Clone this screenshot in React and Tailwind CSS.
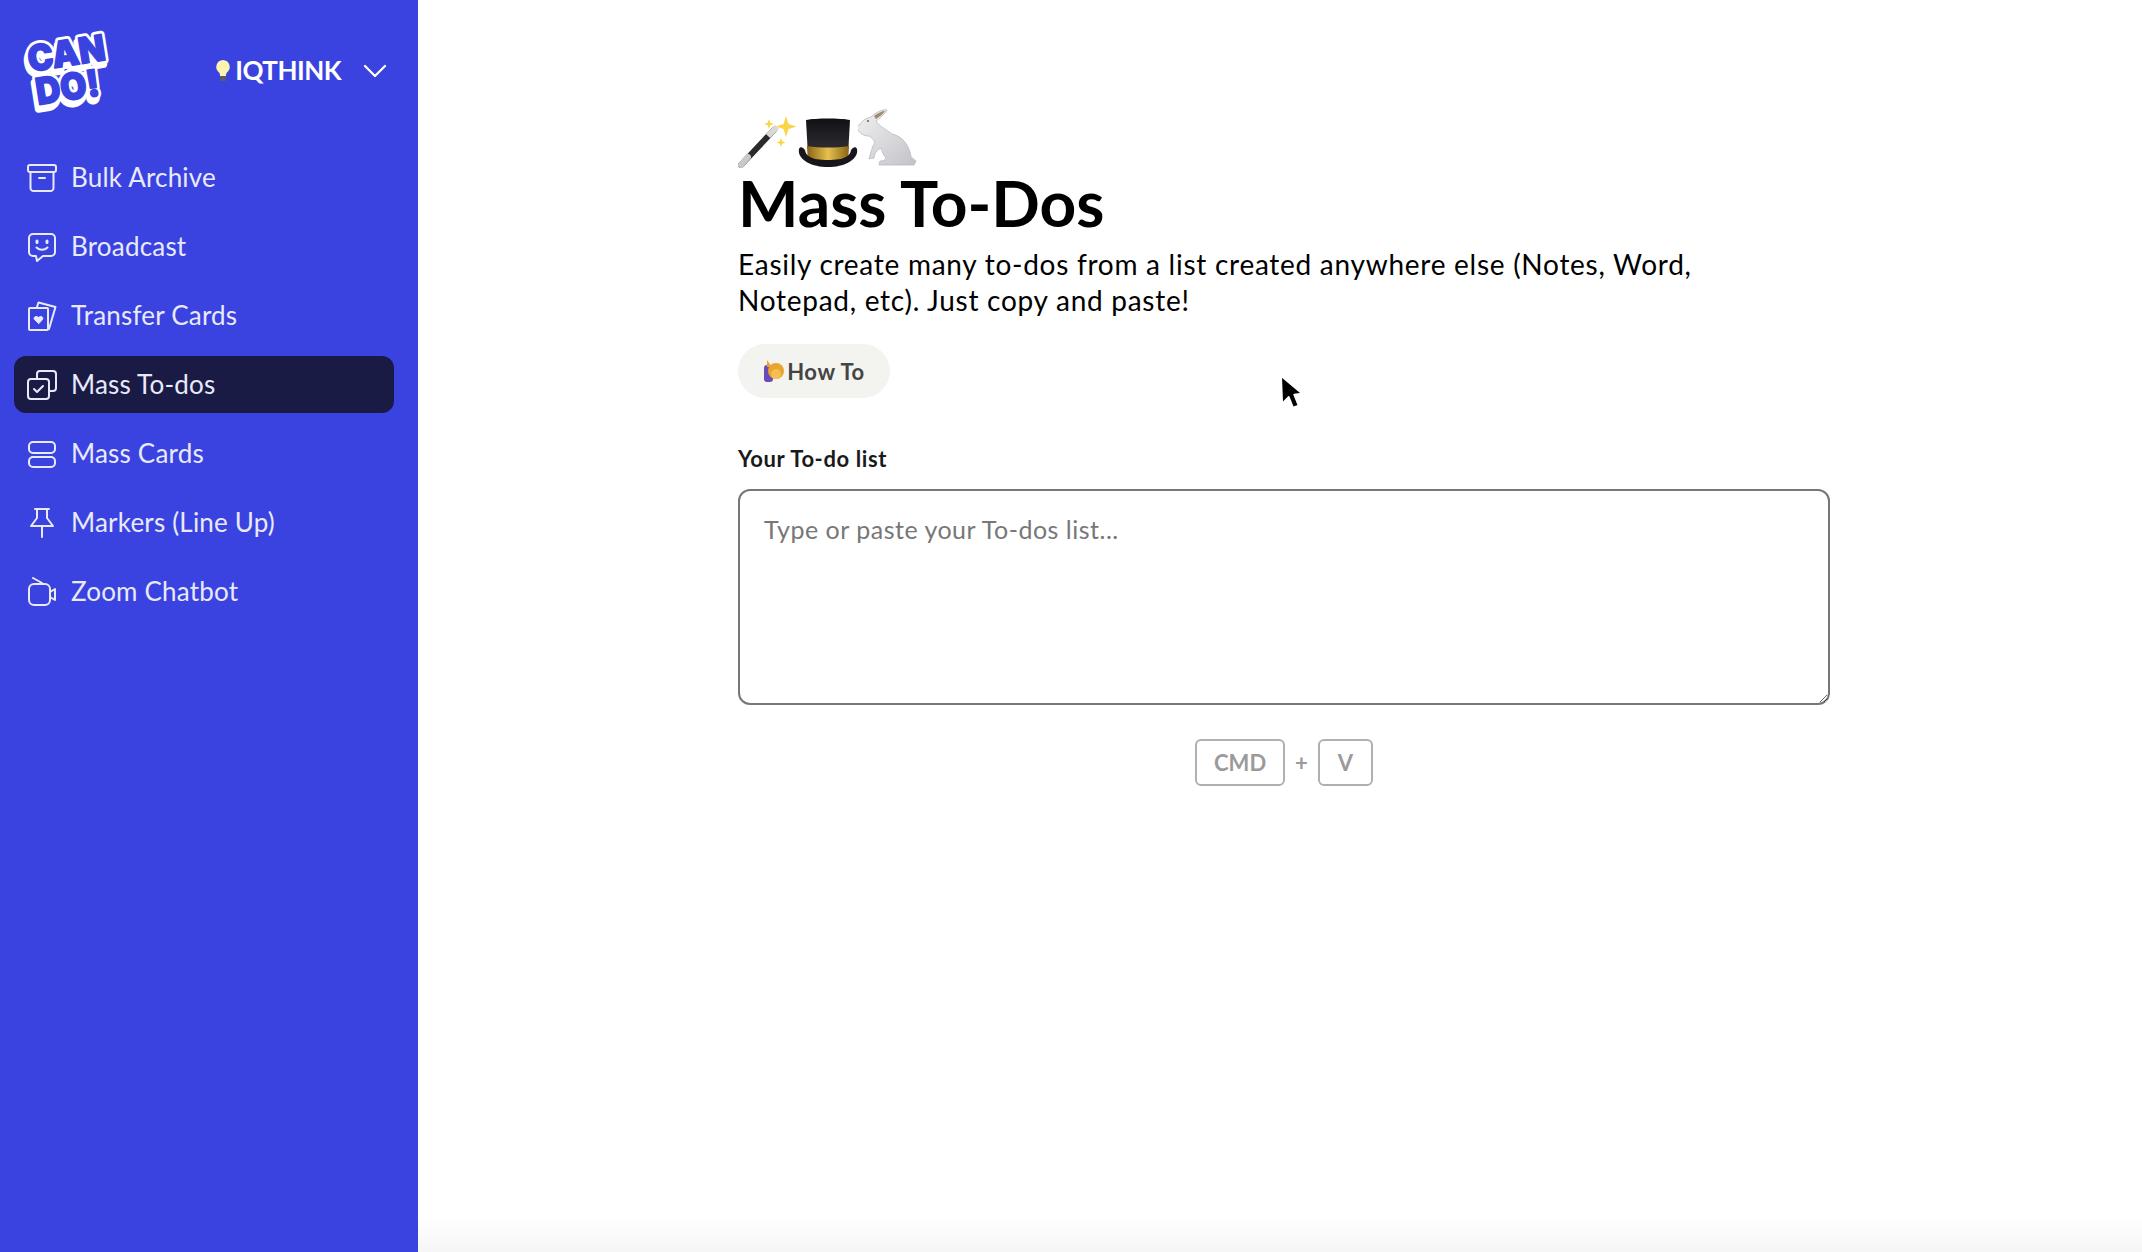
import { ChevronDown } from 'lucide-react'

const Icon = ({ children }) => (
  <svg viewBox="0 0 30 30" className="w-[30px] h-[30px] shrink-0" fill="none" stroke="currentColor" strokeWidth="2" strokeLinecap="round" strokeLinejoin="round">
    {children}
  </svg>
)

const navItems = [
  {
    label: 'Bulk Archive',
    icon: (
      <>
        <rect x="1" y="2" width="28" height="7" rx="2" />
        <path d="M3.500 9v16a3 3 0 0 0 3 3h17a3 3 0 0 0 3-3V9" />
        <path d="M12 15h6" />
      </>
    ),
  },
  {
    label: 'Broadcast',
    icon: (
      <>
        <path d="M6 2h18a4 4 0 0 1 4 4v14a4 4 0 0 1-4 4h-8l-6 5-1-5H6a4 4 0 0 1-4-4V6a4 4 0 0 1 4-4Z" />
        <path d="M10 9v1.500M20 9v1.500" strokeWidth="3" />
        <path d="M9.500 15.500c3 3 8 3 11 0" />
      </>
    ),
  },
  {
    label: 'Transfer Cards',
    icon: (
      <>
        <rect x="2" y="7" width="19" height="22" rx="1" />
        <path d="M10 6l1.500-4.500 17 4.500-6.500 22" />
        <path d="M11.500 22.500l-4-4c-1.600-2 1.500-4.500 4-2 2.500-2.500 5.600 0 4 2Z" fill="currentColor" strokeWidth="1" />
      </>
    ),
  },
  {
    label: 'Mass To-dos',
    icon: (
      <>
        <path d="M10 8V4a3 3 0 0 1 3-3h13a3 3 0 0 1 3 3v14a3 3 0 0 1-3 3h-4" />
        <rect x="1" y="9" width="21" height="20" rx="3" />
        <path d="M7 19l3 3 6-6" />
      </>
    ),
  },
  {
    label: 'Mass Cards',
    icon: (
      <>
        <rect x="2" y="3" width="26" height="11" rx="4" />
        <rect x="2" y="18" width="26" height="10" rx="4" />
      </>
    ),
  },
  {
    label: 'Markers (Line Up)',
    icon: (
      <>
        <path d="M8 1h14M10 1v9l-6 8h22l-6-8V1" />
        <path d="M15 18v11" />
      </>
    ),
  },
  {
    label: 'Zoom Chatbot',
    icon: (
      <>
        <path d="M6 1l9 5" />
        <rect x="2" y="7" width="21" height="21" rx="5" />
        <path d="M23 15l5-3v11l-5-3" />
      </>
    ),
  },
]

const Logo = () => (
  <svg viewBox="0 0 100 92" className="w-[100px] h-[92px] shrink-0">
    <g transform="rotate(-9 50 46)" fontFamily="Inter, sans-serif" fontWeight="900" textAnchor="middle" strokeLinejoin="round">
      <g fill="#fff" stroke="#fff" strokeWidth="7" transform="translate(-2 4)">
        <text x="51" y="41" fontSize="36" textLength="78" lengthAdjust="spacingAndGlyphs">CAN</text>
        <text x="47" y="75" fontSize="37" textLength="64" lengthAdjust="spacingAndGlyphs">DO!</text>
      </g>
      <g fill="#fff" stroke="#fff" strokeWidth="7">
        <text x="51" y="41" fontSize="36" textLength="78" lengthAdjust="spacingAndGlyphs">CAN</text>
        <text x="47" y="75" fontSize="37" textLength="64" lengthAdjust="spacingAndGlyphs">DO!</text>
      </g>
      <g fill="#3a43e0" stroke="#3a43e0" strokeWidth="1.400">
        <text x="51" y="41" fontSize="36" textLength="78" lengthAdjust="spacingAndGlyphs">CAN</text>
        <text x="47" y="75" fontSize="37" textLength="64" lengthAdjust="spacingAndGlyphs">DO!</text>
      </g>
    </g>
  </svg>
)

const Bulb = () => (
  <svg viewBox="0 0 16 24" className="w-4 h-6">
    <path d="M8 1a7 7 0 0 0-4 12.500c1 .9 1 2.500 1 3.500h6c0-1 0-2.600 1-3.500A7 7 0 0 0 8 1Z" fill="#fdf3b0" />
    <rect x="5" y="17" width="6" height="5" rx="1" fill="#5b5b66" />
  </svg>
)

const Wand = () => (
  <svg viewBox="0 0 60 58" className="w-[60px] h-[58px]">
    <path d="M3 55 L36 20" stroke="#2b2b2e" strokeWidth="6" strokeLinecap="round" />
    <path d="M3 55 L10 47" stroke="#c9c9c9" strokeWidth="6" strokeLinecap="round" />
    <path d="M30 26 L39 17" stroke="#d8d8d4" strokeWidth="6" />
    <path d="M48 6l2.500 8 8 2.500-8 2.500-2.500 8-2.500-8-8-2.500 8-2.500Z" fill="#f9d649" />
    <path d="M31 9l1.300 3.700 3.700 1.300-3.700 1.300-1.300 3.700-1.300-3.700-3.700-1.300 3.700-1.300Z" fill="#f9d649" />
    <path d="M43 28l1.200 3.300 3.300 1.200-3.300 1.200-1.200 3.300-1.200-3.300-3.300-1.200 3.300-1.200Z" fill="#f9d649" />
  </svg>
)

const Hat = () => (
  <svg viewBox="0 0 60 50" className="w-[60px] h-[50px]">
    <defs>
      <linearGradient id="band" x1="0" x2="1" y1="0" y2="0">
        <stop offset="0" stopColor="#8a6414" />
        <stop offset="0.5" stopColor="#e6c04f" />
        <stop offset="1" stopColor="#8a6414" />
      </linearGradient>
      <linearGradient id="crown" x1="0" x2="0" y1="0" y2="1">
        <stop offset="0" stopColor="#101014" />
        <stop offset="1" stopColor="#33333a" />
      </linearGradient>
    </defs>
    <path d="M8 2c10-2 34-2 44 0l-2 36H10Z" fill="url(#crown)" />
    <path d="M9 28c12 2 30 2 42 0l-1 14H10Z" fill="url(#band)" />
    <path d="M1 31c-2 10 12 18 29 18s31-8 29-18c-1-3-4-2-6 1-1 6-6 10-23 10S8 38 7 32c-2-3-5-4-6-1Z" fill="#17171b" />
  </svg>
)

const Rabbit = () => (
  <svg viewBox="0 0 60 60" className="w-[60px] h-[60px]">
    <defs>
      <linearGradient id="fur" x1="0" x2="1" y1="0" y2="1">
        <stop offset="0" stopColor="#f2f2f4" />
        <stop offset="1" stopColor="#c2c2c8" />
      </linearGradient>
    </defs>
    <path d="M2 17c1-4 6-7 11-8 4-4 11-8 16-7-2 4-8 9-11 11 3 5 8 7 16 13 11 2 18 13 19 23l5 4-2 4H21l1-4c4 0 5-1 6-3-3-3-4-7-5-10-3 2-6 3-7 10-2 1-3 0-5 1 2-7 3-12 6-17-2-3-4-5-6-6-6 0-11-3-13-11Z" fill="url(#fur)" stroke="#b9b9bf" strokeWidth="0.800" />
    <path d="M16 8c4-3 8-5 11-5-2 3-6 6-9 8Z" fill="#a08a6e" />
    <circle cx="10" cy="13" r="1" fill="#7a5a22" />
  </svg>
)

const Person = () => (
  <svg viewBox="0 0 22 24" className="w-[22px] h-6">
    <rect x="1" y="6" width="9" height="17" rx="3" fill="#6b4bb5" />
    <circle cx="13" cy="12" r="8" fill="#e9a52d" />
    <circle cx="13" cy="15" r="5" fill="#f6bd55" />
    <path d="M4 1l5 7h-5Z" fill="#e9a52d" />
  </svg>
)

const Cursor = () => (
  <svg viewBox="0 0 24 36" className="absolute left-[1279px] top-[374px] w-[26px] h-[39px]">
    <path d="M2 2L3 27 9 21 13 31 18 29 14 19 21 18Z" fill="#000" stroke="#fff" strokeWidth="1.500" strokeLinejoin="round" />
  </svg>
)

const Key = ({ children, className }) => (
  <span className={`h-[47px] flex items-center justify-center border-2 border-[#b0b0b0] rounded-md text-[22px] font-bold text-[#9a9a9a] ${className}`}>
    {children}
  </span>
)

export default function App() {
  return (
    <div className="relative flex h-[1252px] w-full overflow-hidden bg-white font-['Lato',sans-serif]">
      <aside className="w-[418px] shrink-0 bg-[#3a43e0] text-[#e8eafb]">
        <div className="h-[149px] pb-[8px] flex items-center pl-[18px] pr-[23px]">
          <Logo />
          <div className="ml-auto flex items-center">
            <Bulb />
            <span className="ml-[4px] text-[26px] font-bold text-white tracking-[-0.5px]">IQTHINK</span>
            <ChevronDown size={40} className="ml-[14px] text-white" strokeWidth={1.4} />
          </div>
        </div>
        <nav className="flex flex-col gap-3 pl-[14px] pr-6">
          {navItems.map((item) => (
            <div
              key={item.label}
              className={`h-[57px] flex items-center gap-[14px] px-[13px] rounded-xl ${item.label === 'Mass To-dos' ? 'bg-[#1a1b45]' : ''}`}
            >
              <Icon>{item.icon}</Icon>
              <span className="text-[26px] tracking-[0.2px]">{item.label}</span>
            </div>
          ))}
        </nav>
      </aside>

      <main className="flex-1 bg-gradient-to-b from-white from-[97%] to-[#f6f6f6] pl-[320px] pt-[108px]">
        <div className="w-[1092px]">
          <div className="flex items-end h-[60px] gap-0">
            <Wand />
            <Hat />
            <Rabbit />
          </div>
          <h1 className="mt-[-3px] text-[64px] leading-[76px] font-bold text-black">Mass To-Dos</h1>
          <p className="mt-[5px] w-[1000px] text-[28px] leading-[36px] text-black tracking-[0.73px]">
            Easily create many to-dos from a list created anywhere else (Notes, Word, Notepad, etc). Just copy and paste!
          </p>
          <button className="mt-[26px] h-[54px] w-[152px] flex items-center justify-center gap-[2px] rounded-full bg-[#f3f3f0] text-[22px] font-bold text-[#444] tracking-[0.6px]">
            <Person />
            How To
          </button>
          <label className="block mt-[46px] text-[22px] leading-[30px] font-bold text-[#1a1a1a] tracking-[0.6px]">Your To-do list</label>
          <textarea
            className="block mt-[15px] w-full h-[216px] border-2 border-[#777] rounded-xl px-[24px] py-[22px] text-[25px] leading-[32px] tracking-[0.5px] outline-none placeholder:text-[#777]"
            placeholder="Type or paste your To-dos list..."
          />
          <div className="mt-[34px] flex items-center justify-center gap-[10px]">
            <Key className="w-[90px]">CMD</Key>
            <span className="text-[22px] font-bold text-[#9a9a9a]">+</span>
            <Key className="w-[55px]">V</Key>
          </div>
        </div>
      </main>
      <Cursor />
    </div>
  )
}
